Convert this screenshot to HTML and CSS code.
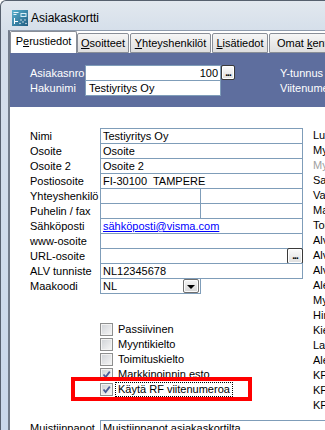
FILE: index.html
```html
<!DOCTYPE html>
<html lang="fi">
<head>
<meta charset="utf-8">
<title>Asiakaskortti</title>
<link rel="stylesheet" href="styles.css">
</head>
<body>
<div class="window">
  <div class="titlebar">
    <svg class="app-icon" viewBox="0 0 16 16" width="16" height="16">
      <defs>
        <linearGradient id="ig" x1="0" y1="0" x2="1" y2="1">
          <stop offset="0" stop-color="#5ab2cf"/>
          <stop offset="1" stop-color="#1d5a80"/>
        </linearGradient>
      </defs>
      <rect x="0" y="0" width="16" height="16" fill="url(#ig)"/>
      <rect x="1.5" y="2" width="5" height="1" fill="#e8f6fb"/>
      <rect x="1.5" y="4" width="3" height="1" fill="#e8f6fb"/>
      <rect x="8.5" y="3" width="6" height="4" fill="#d9eef6"/>
      <rect x="9.5" y="4" width="4" height="2" fill="#3f8fb2"/>
      <rect x="2" y="8" width="1" height="6" fill="#ffffff"/>
      <rect x="3" y="11" width="3" height="1" fill="#ffffff"/>
      <circle cx="9" cy="10" r="0.7" fill="#ffffff"/>
      <circle cx="11" cy="12" r="0.7" fill="#ffffff"/>
      <circle cx="13" cy="10" r="0.7" fill="#ffffff"/>
      <circle cx="8" cy="13.5" r="0.7" fill="#ffffff"/>
      <circle cx="14" cy="13.5" r="0.7" fill="#ffffff"/>
    </svg>
    <span class="title">Asiakaskortti</span>
  </div>
  <div class="main">
    <div class="frame-left"></div>
    <div class="client">
      <div class="tabs">
        <div class="tab active tab-perus">P<u>e</u>rustiedot</div>
        <div class="tab tab-osoit"><u>O</u>soitteet</div>
        <div class="tab tab-yht"><u>Y</u>hteyshenkilöt</div>
        <div class="tab tab-lis"><u>L</u>isätiedot</div>
        <div class="tab tab-omat">Omat <u>k</u>entät</div>
      </div>
      <div class="page">
        <div class="header">
          <div class="hdr-fields">
            <div class="hrow"><span class="hlabel">Asiakasnro</span><span class="hbox num">100</span><span class="btn-ellipsis">...</span></div>
            <div class="hrow"><span class="hlabel">Hakunimi</span><span class="hbox">Testiyritys Oy</span></div>
          </div>
          <div class="hdr-right">
            <div>Y-tunnus</div>
            <div>Viitenumero</div>
          </div>
        </div>
        <div class="content">
          <div class="upper">
            <div class="form-col">
              <div class="form">
                <div class="frow"><span class="flabel">Nimi</span><span class="box">Testiyritys Oy</span></div>
                <div class="frow"><span class="flabel">Osoite</span><span class="box">Osoite</span></div>
                <div class="frow"><span class="flabel">Osoite 2</span><span class="box">Osoite 2</span></div>
                <div class="frow"><span class="flabel">Postiosoite</span><span class="box">FI-30100&nbsp; TAMPERE</span></div>
                <div class="frow"><span class="flabel">Yhteyshenkilö</span><span class="box split"><span class="cell"></span><span class="cell"></span></span></div>
                <div class="frow"><span class="flabel">Puhelin / fax</span><span class="box split"><span class="cell"></span><span class="cell"></span></span></div>
                <div class="frow"><span class="flabel">Sähköposti</span><span class="box"><span class="link">sähköposti@visma.com</span></span></div>
                <div class="frow"><span class="flabel">www-osoite</span><span class="box"></span></div>
                <div class="frow"><span class="flabel">URL-osoite</span><span class="box with-btn"><span class="box-text"></span><span class="btn-ellipsis small">...</span></span></div>
                <div class="frow"><span class="flabel">ALV tunniste</span><span class="box">NL12345678</span></div>
                <div class="frow"><span class="flabel">Maakoodi</span><span class="box select"><span class="select-val">NL</span><span class="dd-btn"></span></span></div>
              </div>
              <div class="checks">
                <div class="check"><span class="cbox"></span><span class="clabel">Passiivinen</span></div>
                <div class="check"><span class="cbox"></span><span class="clabel">Myyntikielto</span></div>
                <div class="check"><span class="cbox"></span><span class="clabel">Toimituskielto</span></div>
                <div class="check"><span class="cbox"><svg viewBox="0 0 11 11" width="11" height="11"><path d="M2.5 5.5 L4.6 8 L8.8 2.6" fill="none" stroke="#4a5c95" stroke-width="1.8"/></svg></span><span class="clabel">Markkinoinnin esto</span></div>
                <div class="check"><span class="cbox"><svg viewBox="0 0 11 11" width="11" height="11"><path d="M2.5 5.5 L4.6 8 L8.8 2.6" fill="none" stroke="#4a5c95" stroke-width="1.8"/></svg></span><span class="clabel focus">Käytä RF viitenumeroa</span></div>
              </div>
            </div>
            <ul class="side-col">
              <li>Luottoraja</li>
              <li>Myyjä</li>
              <li class="disabled">Myyjä 2</li>
              <li>Saldo</li>
              <li>Valuutta</li>
              <li>Maksuehto</li>
              <li>Toimitustapa</li>
              <li>Alv-koodi</li>
              <li>Alv-tili</li>
              <li>Alv-alue</li>
              <li>Alennus-%</li>
              <li>Myyntitili</li>
              <li>Hinnasto</li>
              <li>Kieli</li>
              <li>Laskutustapa</li>
              <li>Alennusryhmä</li>
              <li>KF-tila</li>
              <li>KF-kanava</li>
              <li>KF-tunnus</li>
            </ul>
          </div>
          <div class="frow notes"><span class="flabel">Muistiinpanot</span><span class="box">Muistiinpanot asiakaskortilta</span></div>
        </div>
        <div class="highlight"></div>
      </div>
    </div>
  </div>
</div>
</body>
</html>
```

FILE: styles.css
```css
* { box-sizing: border-box; }

html, body { margin: 0; padding: 0; }

body {
  width: 325px;
  height: 430px;
  overflow: hidden;
  background: #fff;
  font-family: "Liberation Sans", Arial, sans-serif;
  font-size: 11px;
  color: #000;
}

.window {
  width: 380px;
  height: 460px;
  display: flex;
  flex-direction: column;
  border-top: 1px solid #56606e;
  border-left: 1px solid #56606e;
  border-top-left-radius: 6px;
  background: linear-gradient(#e2e8ef, #d5dfea 30px, #c8d7ea);
  overflow: hidden;
}

.titlebar {
  height: 29px;
  flex: none;
  display: flex;
  align-items: flex-start;
  padding: 9px 0 0 11px;
}

.app-icon { display: block; flex: none; }

.title {
  margin-left: 3px;
  font-size: 12px;
  line-height: 16px;
  color: #000;
}

.main { flex: 1; display: flex; min-height: 0; }

.frame-left { width: 7px; flex: none; }

.client {
  flex: 1;
  border-top: 1px solid #8e9bad;
  border-left: 2px solid #737d8b;
  background: #fff;
  display: flex;
  flex-direction: column;
}

/* Tabs */
.tabs {
  height: 22px;
  flex: none;
  display: flex;
  align-items: flex-end;
  background: #fff;
}

.tab {
  height: 20px;
  line-height: 18px;
  border: 1px solid #898e97;
  border-radius: 2px 2px 0 0;
  background: linear-gradient(#f6f6f6, #eaeaea 50%, #dedede);
  text-align: center;
  white-space: nowrap;
  overflow: hidden;
  flex: none;
  margin-left: 1px;
}

.tab.active {
  height: 22px;
  line-height: 18px;
  border-bottom: none;
  background: #fff;
  margin-left: 0;
}

.tab-osoit { margin-left: 0; }
.tab-perus { width: 67px; }
.tab-osoit { width: 52px; }
.tab-yht { width: 81px; }
.tab-lis { width: 56px; }
.tab-omat { width: 80px; text-align: left; padding-left: 7px; }

/* Page */
.page { position: relative; flex: 1; }

.header {
  height: 54px;
  background: #5e6e9e;
  color: #fff;
  display: flex;
  padding: 12px 0 0 20px;
}

.hdr-fields { width: 205px; flex: none; }

.hrow { display: flex; height: 16px; }
.hrow + .hrow { margin-top: -1px; }

.hlabel { width: 55px; flex: none; line-height: 16px; white-space: nowrap; }

.hbox {
  width: 136px;
  flex: none;
  height: 16px;
  border: 1px solid #7f9db9;
  background: #fff;
  color: #000;
  line-height: 14px;
  padding: 0 3px;
  white-space: nowrap;
}

.hbox.num { text-align: right; padding-right: 2px; }

.btn-ellipsis {
  width: 14px;
  height: 15px;
  flex: none;
  border: 1px solid #3a3a3a;
  border-radius: 2px;
  background: linear-gradient(#fbfbfb, #dedede);
  box-shadow: inset 0 0 0 1px #ffffff;
  color: #000;
  font-weight: bold;
  font-size: 10px;
  line-height: 13px;
  text-align: center;
  letter-spacing: -1px;
  overflow: hidden;
}

.hdr-right {
  margin-left: 45px;
  padding-top: 1px;
  line-height: 15px;
  white-space: nowrap;
}

/* Form */
.content { padding: 21px 0 0 20px; }

.upper { display: flex; }

.form-col { width: 273px; flex: none; }

.frow { display: flex; height: 16px; }
.frow + .frow { margin-top: -1px; }

.flabel {
  width: 70px;
  flex: none;
  line-height: 16px;
  white-space: nowrap;
}

.box {
  flex: 1;
  min-width: 0;
  display: flex;
  border: 1px solid #7f9db9;
  background: #fff;
  line-height: 14px;
  padding: 0 2px;
  white-space: nowrap;
  overflow: hidden;
}

.box.split { padding: 0; }
.cell { padding: 0 2px; }
.cell:first-child { width: 100px; flex: none; border-right: 1px solid #7f9db9; }
.cell:last-child { flex: 1; }

.link { color: #0000ff; text-decoration: underline; }

.box.with-btn { padding: 0; overflow: visible; }
.box-text { flex: 1; padding: 0 2px; }
.btn-ellipsis.small {
  width: 16px;
  height: 16px;
  margin: -1px -1px -1px 0;
  line-height: 14px;
}

.box.select { flex: none; width: 101px; padding: 0 0 0 2px; align-items: center; }
.select-val { flex: 1; }

.dd-btn {
  width: 16px;
  height: 14px;
  flex: none;
  margin-right: 1px;
  border: 1px solid #6f6f6f;
  border-radius: 2px;
  background: linear-gradient(#f4f4f4, #d6d6d6);
  box-shadow: inset 0 0 0 1px #fbfbfb;
  display: flex;
  align-items: center;
  justify-content: center;
  padding-top: 2px;
}

.dd-btn::after {
  content: "";
  border-left: 4px solid transparent;
  border-right: 4px solid transparent;
  border-top: 4px solid #000;
}

/* Checkboxes */
.checks { margin-top: 28px; padding-left: 70px; }

.check { display: flex; align-items: center; height: 15px; }

.cbox {
  width: 13px;
  height: 13px;
  flex: none;
  border: 1px solid #8e8f8f;
  background: linear-gradient(135deg, #cfd2d6, #f7f7f7);
  box-shadow: inset 0 0 0 1px #f3f3f3;
}

.cbox svg { display: block; }

.clabel {
  margin-left: 2px;
  padding: 0 2px;
  border: 1px solid transparent;
  line-height: 13px;
  white-space: nowrap;
}

.clabel.focus { border: 1px dotted #000; }

/* Right-hand label column */
.side-col {
  list-style: none;
  margin: 0 0 0 10px;
  padding: 0;
  line-height: 15px;
  white-space: nowrap;
}

.side-col .disabled { color: #a0a0a0; }

.frow.notes { margin-top: 7px; }

/* Red annotation frame */
.highlight {
  position: absolute;
  left: 61px;
  top: 324px;
  width: 181px;
  height: 24px;
  border: 4px solid #ff0000;
}
```
